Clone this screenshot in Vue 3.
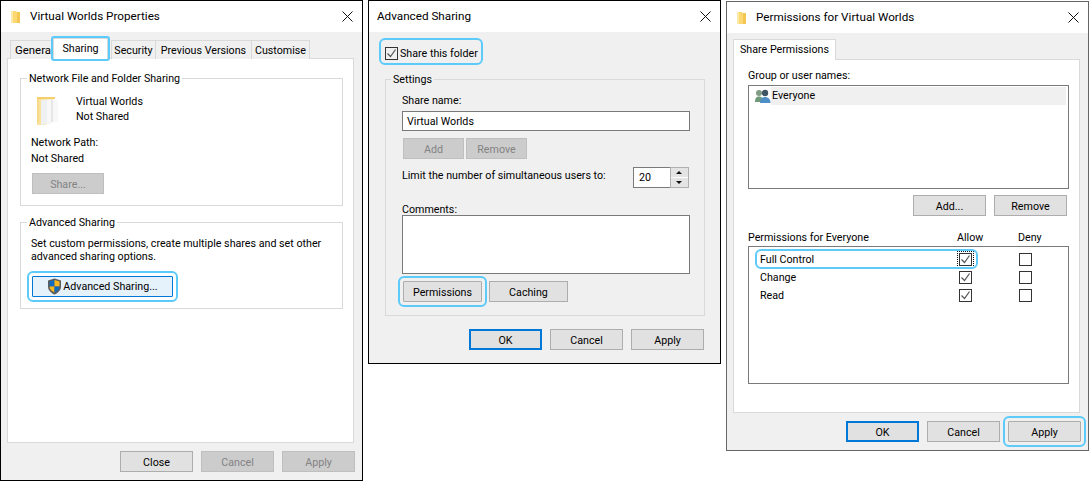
<script setup>
const perms = [
  { name: 'Full Control', focus: true },
  { name: 'Change', focus: false },
  { name: 'Read', focus: false },
]
</script>

<template>
  <div class="page">
    <!-- Properties -->
    <section class="win win-a">
      <header class="title">
        <svg class="small-folder" width="12" height="14" viewBox="0 0 12 14"><path d="M1 1h5l1 1h3v11H1z" fill="#fcd873"/><path d="M7 2h3v11H7z" fill="#f4c653"/><path d="M1 1h2v12H1z" fill="#fde9a8"/></svg>
        <span class="title-text">Virtual Worlds Properties</span>
        <svg class="close" width="11" height="11" viewBox="0 0 11 11"><path d="M.5.5l10 10M10.5.5l-10 10" stroke="#111" fill="none"/></svg>
      </header>
      <div class="tabs tabs-a">
        <div class="tab t-gen"><span>General</span></div>
        <div class="tab t-on hl">Sharing</div>
        <div class="tab t-sec">Security</div>
        <div class="tab t-prev">Previous Versions</div>
        <div class="tab t-cus">Customise</div>
      </div>
      <div class="panel panel-a">
        <fieldset class="group g-net">
          <legend>Network File and Folder Sharing</legend>
          <div class="share-head">
            <svg class="big-folder" width="24" height="30" viewBox="0 0 24 30">
              <path d="M1 1h14l2 2v22l-8 4H1z" fill="#fbe29c"/>
              <path d="M1 1h18v2H1z" fill="#f6cf6c"/>
              <path d="M5 4l11-1v24l-11 2z" fill="#eef0f2"/>
              <path d="M11 4h11v22l-11 1z" fill="#f8f8f8"/>
              <path d="M16 4v22" stroke="#d3d5d8"/>
              <path d="M2 3v24" stroke="#f3cf76"/>
            </svg>
            <div class="share-text">Virtual Worlds<br>Not Shared</div>
          </div>
          <div class="path-text">Network Path:<br>Not Shared</div>
          <button class="btn off btn-share">Share...</button>
        </fieldset>
        <fieldset class="group g-adv">
          <legend>Advanced Sharing</legend>
          <p class="adv-text">Set custom permissions, create multiple shares and set other advanced sharing options.</p>
          <button class="btn btn-adv hl">
            <svg width="15" height="17" viewBox="0 0 15 17"><path d="M7.5.5L14 2.5v6c0 3.8-3 6.5-6.5 8C4 15 1 12.300 1 8.500v-6z" fill="#5c5c5c"/><path d="M7.500 2L2.500 3.500V8.500h5z" fill="#0f6cc4"/><path d="M7.500 2l5 1.500V8.500h-5z" fill="#f6b820"/><path d="M2.500 8.500h5v6c-2.500-1-5-3-5-6z" fill="#f6b820"/><path d="M7.500 8.500h5c0 3-2.500 5-5 6z" fill="#0f6cc4"/></svg>
            <span>Advanced Sharing...</span>
          </button>
        </fieldset>
      </div>
      <footer class="foot foot-a">
        <button class="btn wide">Close</button>
        <button class="btn wide off">Cancel</button>
        <button class="btn wide off">Apply</button>
      </footer>
    </section>

    <!-- Advanced Sharing -->
    <section class="win win-b">
      <header class="title">
        <span class="title-text">Advanced Sharing</span>
        <svg class="close" width="11" height="11" viewBox="0 0 11 11"><path d="M.5.5l10 10M10.5.5l-10 10" stroke="#111" fill="none"/></svg>
      </header>
      <label class="share-check hl">
        <span class="cb"><svg width="11" height="11" viewBox="0 0 11 11"><path d="M1.500 5.500l3 3 5-7" stroke="#555" stroke-width="1.200" fill="none"/></svg></span>
        <span>Share this folder</span>
      </label>
      <fieldset class="group g-set">
        <legend>Settings</legend>
        <div class="lbl">Share name:</div>
        <div class="input">Virtual Worlds</div>
        <div class="btn-row">
          <button class="btn off small">Add</button>
          <button class="btn off small">Remove</button>
        </div>
        <div class="limit">
          <span>Limit the number of simultaneous users to:</span>
          <div class="num">
            <span class="num-val">20</span>
            <span class="spin"><i class="up"></i><i class="down"></i></span>
          </div>
        </div>
        <div class="lbl lbl-com">Comments:</div>
        <div class="textarea"></div>
        <div class="btn-row btn-row-2">
          <button class="btn wide-p hl">Permissions</button>
          <button class="btn wide-p">Caching</button>
        </div>
      </fieldset>
      <footer class="foot foot-b">
        <button class="btn wide def">OK</button>
        <button class="btn wide">Cancel</button>
        <button class="btn wide">Apply</button>
      </footer>
    </section>

    <!-- Permissions -->
    <section class="win win-c">
      <header class="title">
        <svg class="small-folder" width="12" height="14" viewBox="0 0 12 14"><path d="M1 1h5l1 1h3v11H1z" fill="#fcd873"/><path d="M7 2h3v11H7z" fill="#f4c653"/><path d="M1 1h2v12H1z" fill="#fde9a8"/></svg>
        <span class="title-text">Permissions for Virtual Worlds</span>
        <svg class="close" width="11" height="11" viewBox="0 0 11 11"><path d="M.5.5l10 10M10.5.5l-10 10" stroke="#111" fill="none"/></svg>
      </header>
      <div class="tabs tabs-c">
        <div class="tab t-on t-share">Share Permissions</div>
      </div>
      <div class="panel panel-c">
        <div class="lbl">Group or user names:</div>
        <div class="list names">
          <div class="name-row">
            <svg width="17" height="16" viewBox="0 0 17 16"><circle cx="5" cy="5" r="3" fill="#7f9c84"/><path d="M1 14c0-4 1.500-5.500 4-5.500S9 10 9 14z" fill="#6f9a76"/><circle cx="11" cy="5" r="3.200" fill="#3f5565"/><path d="M6 15c0-4 2-6 5-6s5.500 2 5.500 6z" fill="#4f8fc8"/></svg>
            <span class="name-sel">Everyone</span>
          </div>
        </div>
        <div class="btn-row end">
          <button class="btn wide">Add...</button>
          <button class="btn wide">Remove</button>
        </div>
        <div class="perm-head">
          <span class="ph-name">Permissions for Everyone</span>
          <span class="ph-allow">Allow</span>
          <span class="ph-deny">Deny</span>
        </div>
        <div class="list perms">
          <div v-for="p in perms" :key="p.name" class="perm-row">
            <div class="perm-main" :class="{ 'perm-hl': p.focus }">
              <span class="perm-name">{{ p.name }}</span>
              <span class="cb cb-p" :class="{ dotted: p.focus }"><svg width="11" height="11" viewBox="0 0 11 11"><path d="M1.500 5.500l3 3 5-7" stroke="#555" stroke-width="1.200" fill="none"/></svg></span>
            </div>
            <span class="cb cb-deny"></span>
          </div>
        </div>
      </div>
      <footer class="foot foot-c">
        <button class="btn wide def">OK</button>
        <button class="btn wide">Cancel</button>
        <button class="btn wide hl">Apply</button>
      </footer>
    </section>
  </div>
</template>

<style scoped>
* { box-sizing: border-box; }
.page {
  width: 1090px; height: 484px; background: #fff;
  display: flex; align-items: flex-start;
  font: 10.7px/15px Roboto, sans-serif; color: #000;
  overflow: hidden;
}
.win { background: #f0f0f0; border: 1px solid #000; flex: none; display: flex; flex-direction: column; }
.win-a { width: 363px; height: 481px; }
.win-b { width: 353px; height: 364px; margin-left: 5px; }
.win-c { width: 363px; height: 450px; margin: 1px 0 0 5px; border-color: #666; }

.title { height: 31px; background: #fff; display: flex; align-items: center; padding: 0 9px 0 8px; flex: none; }
.small-folder { margin: 0 8px 0 1px; }
.title-text { flex: 1; font-size: 11.7px; }

.tabs { display: flex; position: relative; z-index: 1; height: 22px; margin-bottom: -1px; align-items: flex-end; flex: none; }
.tabs-a { margin-top: 5px; padding-left: 10px; }
.tabs-c { margin-top: 5px; padding-left: 6px; }
.tab { height: 19px; background: #f0f0f0; border: 1px solid #d9d9d9; border-bottom: 0; margin-left: -1px; text-align: center; line-height: 19px; white-space: nowrap; overflow: hidden; }
.t-gen { width: 42px; text-align: left; padding-left: 4px; border-right: 0; font-size: 11.4px; }
.t-sec { width: 45px; }
.t-prev { width: 97px; }
.t-cus { width: 59px; }
.t-on { background: #fff; height: 21px; z-index: 1; line-height: 20px; }
.tabs-a .t-on { width: 55px; margin-left: 1px; margin-right: 4px; }
.t-share { width: 103px; margin-left: 0; }

.panel { background: #fff; border: 1px solid #d9d9d9; flex: none; }
.panel-a { margin-left: 6px; width: 347px; height: 385px; padding: 11px 0 0 12px; }
.panel-c { margin-left: 6px; width: 347px; height: 354px; padding: 8px 0 0 14px; }

.group { border: 1px solid #d9d9d9; margin: 0; padding: 0; min-width: 0; display: block; }
.group legend { margin-left: -4px; padding: 2px 2px 0; line-height: 14px; }
.g-net { width: 323px; height: 136px; padding-left: 10px; }
.g-adv { width: 323px; height: 95px; margin-top: 8px; padding-left: 10px; }
.g-set { width: 320px; height: 245px; margin: 11px 0 0 16px; padding-left: 16px; }
.g-set legend { margin-left: -11px; }

.share-head { display: flex; padding: 10px 0 0 5px; height: 40px; }
.big-folder { flex: none; }
.share-text { margin: -2px 0 0 16px; }
.path-text { margin: 9px 0 0 0; line-height: 16px; }
.btn-share { margin-top: 6px; margin-left: 1px; width: 72px; }

.adv-text { margin: 7px 0 0; line-height: 13px; width: 300px; height: 26px; }

.btn { height: 21px; border: 1px solid #adadad; background: #e1e1e1; color: #000; font: inherit; padding: 1px 0 0; display: block; line-height: 17px; }
.btn.off { background: #ccc; border-color: #bfbfbf; color: #838383; }
.btn.wide { width: 73px; }
.btn.small { width: 61px; }
.btn.wide-p { width: 79px; }
.btn.def { border: 2px solid #0078d7; }
.btn.btn-adv { width: 141px; margin: 13px 0 0 1px; display: flex; align-items: center; justify-content: center; gap: 1px; background: #e5f1fb; border-color: #0078d7; padding: 0; }

.hl { outline: 2px solid #5ccbfa; outline-offset: 3px; border-radius: 1px; }
.tabs-a .hl { outline-offset: 0; }

.foot { display: flex; gap: 8px; justify-content: flex-end; flex: none; }
.foot-a { margin-top: 8px; padding-right: 7px; }
.foot-b { margin-top: 13px; padding-right: 16px; }
.foot-c { margin-top: 8px; padding-right: 7px; }

.share-check { display: flex; align-items: center; gap: 2px; align-self: flex-start; margin: 11px 0 0 15px; height: 17px; padding: 3px 0 0 1px; line-height: 15px; outline-offset: 3px; }
.cb { width: 13px; height: 13px; border: 1px solid #333; background: #fff; display: inline-flex; align-items: center; justify-content: center; flex: none; }
.share-check .cb { background: #f0f0f0; }

.lbl { line-height: 15px; }
.g-set .lbl:first-of-type { margin-top: 6px; }
.input { width: 288px; height: 20px; margin-top: 3px; border: 1px solid #7a7a7a; background: #fff; padding-left: 4px; line-height: 20px; }
.textarea { width: 288px; height: 59px; border: 1px solid #7a7a7a; background: #fff; }
.btn-row { display: flex; gap: 2px; margin: 7px 0 0 1px; }
.btn-row-2 { gap: 7px; }
.limit { display: flex; align-items: flex-start; justify-content: space-between; width: 287px; margin-top: 8px; height: 21px; line-height: 18px; }
.num { width: 56px; height: 21px; border: 1px solid #7a7a7a; background: #fff; display: flex; }
.num-val { flex: 1; padding-left: 5px; line-height: 19px; }
.spin { width: 19px; margin: -1px -1px -1px 0; display: flex; flex-direction: column; gap: 1px; background: #fff; border: 1px solid #b0b0b0; }
.spin i { flex: 1; position: relative; display: block; background: #e4e4e4; }
.spin i::after { content: ""; position: absolute; left: 5px; top: 3px; border: solid transparent; border-width: 0 3.5px 3px; border-bottom-color: #111; }
.spin i.down::after { border-width: 3px 3.5px 0; border-top-color: #111; border-bottom-color: transparent; }
.lbl-com { margin: 14px 0 -2px; }

.list { border: 1px solid #7a7a7a; background: #fff; width: 321px; }
.names { height: 104px; margin-top: 2px; padding: 1px 2px 0 5px; }
.name-row { display: flex; align-items: center; height: 18px; }
.name-sel { flex: 1; background: #f0f0f0; line-height: 18px; padding-left: 1px; }
.end { justify-content: flex-end; gap: 8px; margin: 6px 0 0; width: 319px; }
.perm-head { display: flex; margin-top: 13px; height: 16px; width: 321px; line-height: 18px; }
.ph-name { width: 209px; }
.ph-allow { width: 61px; }
.perms { height: 138px; padding: 3px 0 0 7px; margin-top: 1px; }
.perm-row { display: flex; align-items: center; height: 18px; }
.perm-main { width: 221px; height: 18px; display: flex; align-items: center; justify-content: space-between; padding: 0 5px 0 4px; flex: none; }
.perm-hl { outline: 2px solid #5ccbfa; border-radius: 5px; outline-offset: -1px; }
.cb-p.dotted { outline: 1px dotted #111; outline-offset: 1px; }
.cb-deny { margin-left: 42px; }
</style>
